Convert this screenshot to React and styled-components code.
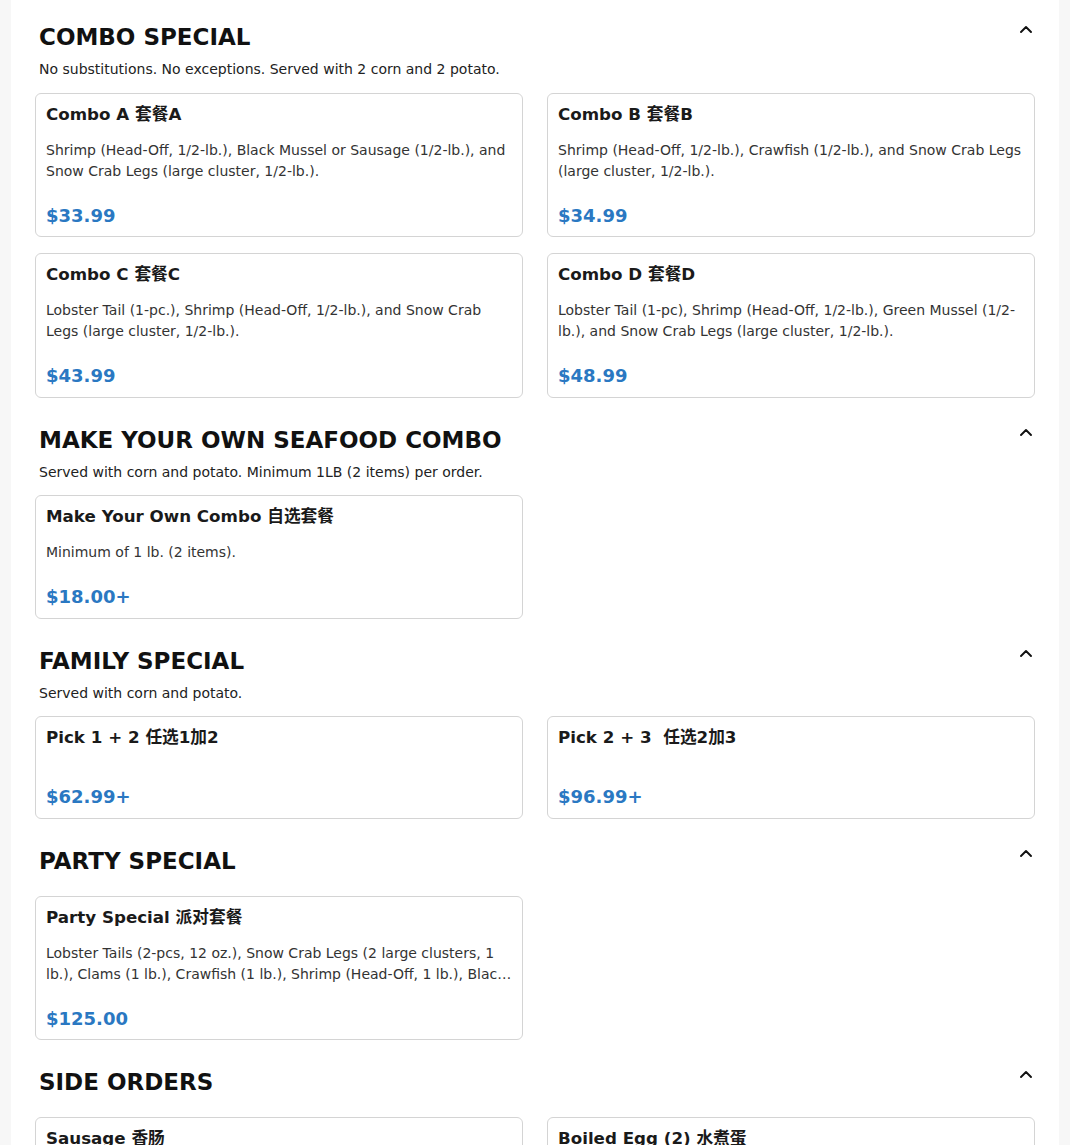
import React from "react";
import styled, { createGlobalStyle } from "styled-components";

const GlobalStyle = createGlobalStyle`
  html, body { margin: 0; padding: 0; background: #f7f7f7; }
  body {
    font-family: "DejaVu Sans", "Noto Sans CJK SC", sans-serif;
    color: #1a1a1a;
  }
  * { box-sizing: border-box; }
`;

const Panel = styled.main`
  max-width: 1048px;
  margin: 0 auto;
  min-height: 1145px;
  background: #ffffff;
  padding: 0 24px;
`;

const Section = styled.section`
  padding: 24px 0 5px;
`;

const Header = styled.header`
  display: flex;
  justify-content: space-between;
  align-items: flex-start;
  min-height: 37px;
  padding: 0 3px 0 4px;
  margin-bottom: 11px;
`;

const HeadText = styled.div`
  display: flex;
  flex-direction: column;
`;

const Title = styled.h2`
  margin: 0;
  font-size: 23px;
  line-height: 27px;
  font-weight: 700;
  color: #111;
`;

const Subtitle = styled.p`
  margin: 8px 0 1.5px;
  font-size: 14px;
  line-height: 21px;
  color: #222;
`;

const Toggle = styled.button`
  border: 0;
  background: none;
  padding: 0;
  margin-top: 1px;
  width: 12px;
  height: 8px;
  display: flex;
  cursor: pointer;
  color: #111;
`;

const Grid = styled.div`
  display: grid;
  grid-template-columns: 1fr 1fr;
  column-gap: 24px;
  row-gap: 16px;
`;

const Card = styled.article`
  border: 1px solid #d4d4d4;
  border-radius: 6px;
  padding: 10px 10px 7.5px;
  background: #fff;
  display: flex;
  flex-direction: column;
`;

const ItemName = styled.h3`
  margin: 0 0 16px;
  font-size: 16.7px;
  line-height: 20px;
  font-weight: 700;
  color: #1a1a1a;
  white-space: pre;
`;

const ItemDesc = styled.p`
  margin: 0 0 20px;
  font-size: 14px;
  line-height: 21px;
  color: #333;
  display: -webkit-box;
  -webkit-line-clamp: 2;
  -webkit-box-orient: vertical;
  overflow: hidden;
`;

const Price = styled.div`
  font-size: 18px;
  line-height: 27px;
  font-weight: 700;
  color: #2a78c2;
`;

const Chevron = () => (
  <svg width="12" height="8" viewBox="0 0 12 8" fill="none">
    <path d="M1 7 L6 2 L11 7" stroke="currentColor" strokeWidth="1.9" strokeLinecap="round" strokeLinejoin="round" />
  </svg>
);

const sections = [
  {
    title: "COMBO SPECIAL",
    subtitle: "No substitutions. No exceptions. Served with 2 corn and 2 potato.",
    items: [
      { name: "Combo A 套餐A", desc: "Shrimp (Head-Off, 1/2-lb.), Black Mussel or Sausage (1/2-lb.), and Snow Crab Legs (large cluster, 1/2-lb.).", price: "$33.99" },
      { name: "Combo B 套餐B", desc: "Shrimp (Head-Off, 1/2-lb.), Crawfish (1/2-lb.), and Snow Crab Legs (large cluster, 1/2-lb.).", price: "$34.99" },
      { name: "Combo C 套餐C", desc: "Lobster Tail (1-pc.), Shrimp (Head-Off, 1/2-lb.), and Snow Crab Legs (large cluster, 1/2-lb.).", price: "$43.99" },
      { name: "Combo D 套餐D", desc: "Lobster Tail (1-pc), Shrimp (Head-Off, 1/2-lb.), Green Mussel (1/2-lb.), and Snow Crab Legs (large cluster, 1/2-lb.).", price: "$48.99" },
    ],
  },
  {
    title: "MAKE YOUR OWN SEAFOOD COMBO",
    subtitle: "Served with corn and potato. Minimum 1LB (2 items) per order.",
    items: [
      { name: "Make Your Own Combo 自选套餐", desc: "Minimum of 1 lb. (2 items).", price: "$18.00+" },
    ],
  },
  {
    title: "FAMILY SPECIAL",
    subtitle: "Served with corn and potato.",
    items: [
      { name: "Pick 1 + 2 任选1加2", desc: "", price: "$62.99+" },
      { name: "Pick 2 + 3  任选2加3", desc: "", price: "$96.99+" },
    ],
  },
  {
    title: "PARTY SPECIAL",
    subtitle: "",
    items: [
      { name: "Party Special 派对套餐", desc: "Lobster Tails (2-pcs, 12 oz.), Snow Crab Legs (2 large clusters, 1 lb.), Clams (1 lb.), Crawfish (1 lb.), Shrimp (Head-Off, 1 lb.), Black Mussels (1 lb.), Sausage (1 lb.), 4 corn and 4 potato.", price: "$125.00" },
    ],
  },
  {
    title: "SIDE ORDERS",
    subtitle: "",
    items: [
      { name: "Sausage 香肠", desc: "", price: "$4.99" },
      { name: "Boiled Egg (2) 水煮蛋", desc: "", price: "$2.50" },
    ],
  },
];

export default function App() {
  return (
    <>
      <GlobalStyle />
      <Panel>
        {sections.map((s) => (
          <Section key={s.title}>
            <Header>
              <HeadText>
                <Title>{s.title}</Title>
                {s.subtitle && <Subtitle>{s.subtitle}</Subtitle>}
              </HeadText>
              <Toggle aria-label="Collapse section">
                <Chevron />
              </Toggle>
            </Header>
            <Grid>
              {s.items.map((it) => (
                <Card key={it.name}>
                  <ItemName>{it.name}</ItemName>
                  <ItemDesc>{it.desc}</ItemDesc>
                  <Price>{it.price}</Price>
                </Card>
              ))}
            </Grid>
          </Section>
        ))}
      </Panel>
    </>
  );
}
